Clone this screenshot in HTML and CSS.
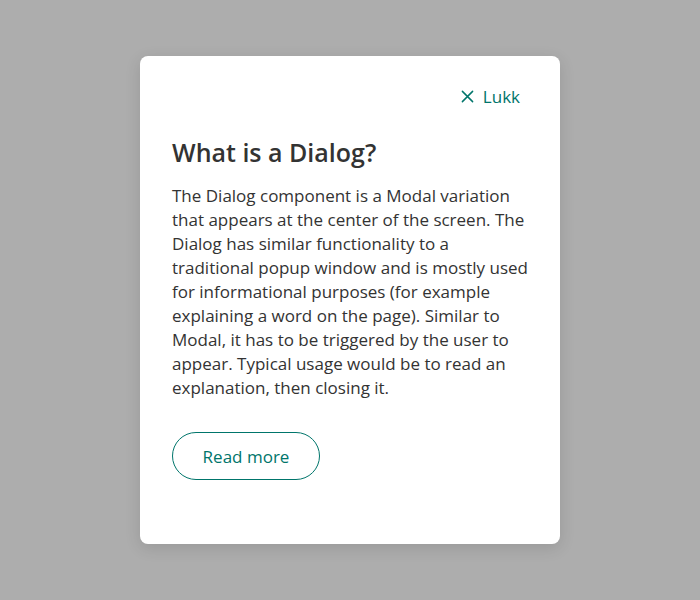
FILE: index.html
```html
<!DOCTYPE html>
<html lang="en">
<head>
<meta charset="utf-8">
<link rel="stylesheet" href="styles.css">
</head>
<body>
<div class="overlay">
  <div class="dialog" role="dialog">
    <div class="close-row">
      <button class="close">
        <svg width="14" height="14" viewBox="0 0 14 14" aria-hidden="true"><path d="M1.5 1.5 L12.5 12.5 M12.5 1.5 L1.5 12.5" stroke="#00756b" stroke-width="1.6" fill="none" stroke-linecap="round"/></svg>
        <span>Lukk</span>
      </button>
    </div>
    <h2 class="title">What is a Dialog?</h2>
    <p class="body">The Dialog component is a Modal variation that appears at the center of the screen. The Dialog has similar functionality to a traditional popup window and is mostly used for informational purposes (for example explaining a word on the page). Similar to Modal, it has to be triggered by the user to appear. Typical usage would be to read an explanation, then closing it.</p>
    <button class="more">Read more</button>
  </div>
</div>
</body>
</html>
```

FILE: styles.css
```css
html, body {
  margin: 0;
  padding: 0;
}
body {
  font-family: "Open Sans", "Noto Sans", sans-serif;
  color: #333;
  background: #adadad;
}
.overlay {
  width: 700px;
  height: 600px;
  display: flex;
  justify-content: center;
  align-items: flex-start;
  padding-top: 56px;
  box-sizing: border-box;
}
.dialog {
  width: 420px;
  height: 488px;
  box-sizing: border-box;
  background: #fff;
  border-radius: 8px;
  box-shadow: 0 4px 16px rgba(0,0,0,0.12);
  padding: 24px 32px 64px 32px;
  display: flex;
  flex-direction: column;
  align-items: flex-start;
}
.close-row {
  align-self: stretch;
  display: flex;
  justify-content: flex-end;
  height: 32px;
}
.close {
  border: 0;
  background: none;
  font: inherit;
  font-size: 17px;
  color: #00756b;
  display: flex;
  align-items: center;
  gap: 9px;
  padding: 0 8px;
  height: 32px;
  cursor: pointer;
}
.close svg {
  width: 13px;
  height: 13px;
}
.title {
  margin: 24px 0 0 0;
  font-size: 25px;
  line-height: 32px;
  font-weight: 600;
  color: #333;
}
.body {
  margin: 16px 0 0 0;
  font-size: 17px;
  line-height: 24px;
  width: 356px;
}
.more {
  margin-top: 32px;
  width: 148px;
  height: 48px;
  border: 1px solid #00756b;
  border-radius: 24px;
  background: #fff;
  color: #00756b;
  font: inherit;
  font-size: 17px;
  cursor: pointer;
}
```
